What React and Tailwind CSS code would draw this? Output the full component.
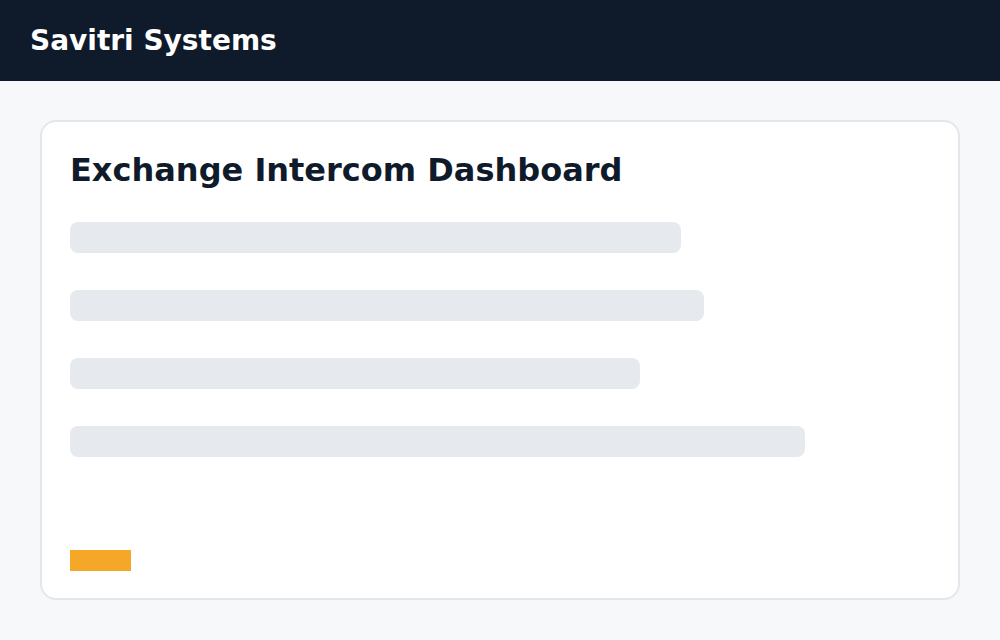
import React from "react";

const bars = [611, 634, 570, 735];

export default function App() {
  return (
    <div className="min-h-[640px] bg-[#f7f8fa] font-['DejaVu_Sans',sans-serif]">
      <header className="h-[81px] bg-[#0f1b2a] flex items-center px-[30px]">
        <h1 className="text-white font-bold text-[28px] leading-none">Savitri Systems</h1>
      </header>
      <main className="px-[40px] pt-[39px] pb-[40px]">
        <div className="h-[480px] bg-white border-2 border-[#e3e7eb] rounded-[16px] px-[28px] pt-[28px] pb-[27px] flex flex-col">
          <h2 className="text-[#0f1b2a] font-bold text-[32px] leading-[40px]">Exchange Intercom Dashboard</h2>
          <div className="mt-[32px] flex flex-col gap-[37px]">
            {bars.map((w, i) => (
              <div key={i} className="h-[31px] rounded-[8px] bg-[#e6e9ed]" style={{ width: w }} />
            ))}
          </div>
          <div className="mt-auto w-[61px] h-[21px] bg-[#f5a728]" />
        </div>
      </main>
    </div>
  );
}
